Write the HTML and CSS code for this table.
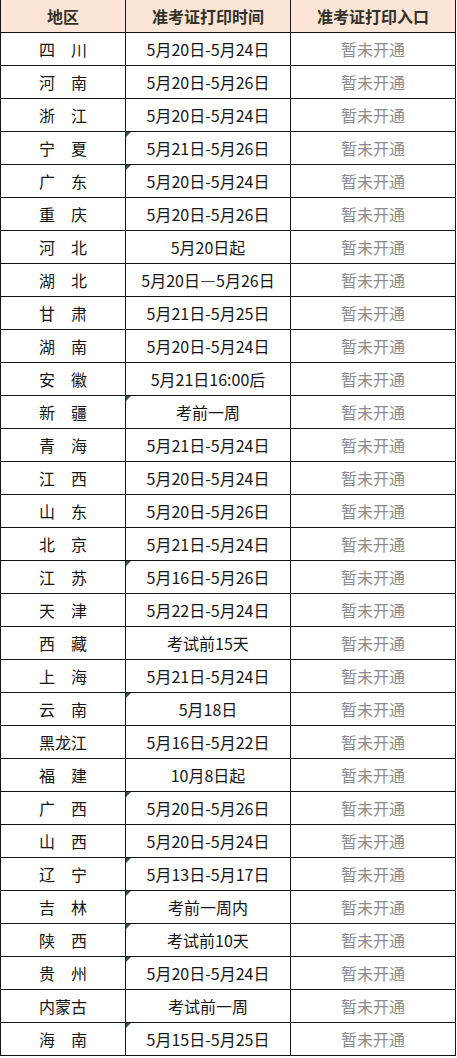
FILE: index.html
```html
<!DOCTYPE html>
<html lang="zh">
<head>
<meta charset="utf-8">
<title>准考证打印时间</title>
<link rel="stylesheet" href="styles.css">
</head>
<body>
<table class="sheet">
  <thead>
    <tr><th class="c1">地区</th><th class="c2">准考证打印时间</th><th class="c3">准考证打印入口</th></tr>
  </thead>
  <tbody>
    <tr><td class="c1">四　川</td><td class="c2">5月20日-5月24日</td><td class="c3">暂未开通</td></tr>
    <tr><td class="c1">河　南</td><td class="c2">5月20日-5月26日</td><td class="c3">暂未开通</td></tr>
    <tr><td class="c1">浙　江</td><td class="c2">5月20日-5月24日</td><td class="c3">暂未开通</td></tr>
    <tr><td class="c1">宁　夏</td><td class="c2 mark">5月21日-5月26日</td><td class="c3">暂未开通</td></tr>
    <tr><td class="c1">广　东</td><td class="c2 mark">5月20日-5月24日</td><td class="c3">暂未开通</td></tr>
    <tr><td class="c1">重　庆</td><td class="c2">5月20日-5月26日</td><td class="c3">暂未开通</td></tr>
    <tr><td class="c1">河　北</td><td class="c2">5月20日起</td><td class="c3">暂未开通</td></tr>
    <tr><td class="c1">湖　北</td><td class="c2">5月20日—5月26日</td><td class="c3">暂未开通</td></tr>
    <tr><td class="c1">甘　肃</td><td class="c2">5月21日-5月25日</td><td class="c3">暂未开通</td></tr>
    <tr><td class="c1">湖　南</td><td class="c2">5月20日-5月24日</td><td class="c3">暂未开通</td></tr>
    <tr><td class="c1">安　徽</td><td class="c2">5月21日16:00后</td><td class="c3">暂未开通</td></tr>
    <tr><td class="c1">新　疆</td><td class="c2 mark">考前一周</td><td class="c3">暂未开通</td></tr>
    <tr><td class="c1">青　海</td><td class="c2">5月21日-5月24日</td><td class="c3">暂未开通</td></tr>
    <tr><td class="c1">江　西</td><td class="c2">5月20日-5月24日</td><td class="c3">暂未开通</td></tr>
    <tr><td class="c1">山　东</td><td class="c2">5月20日-5月26日</td><td class="c3">暂未开通</td></tr>
    <tr><td class="c1">北　京</td><td class="c2">5月21日-5月24日</td><td class="c3">暂未开通</td></tr>
    <tr><td class="c1">江　苏</td><td class="c2 mark">5月16日-5月26日</td><td class="c3">暂未开通</td></tr>
    <tr><td class="c1">天　津</td><td class="c2">5月22日-5月24日</td><td class="c3">暂未开通</td></tr>
    <tr><td class="c1">西　藏</td><td class="c2">考试前15天</td><td class="c3">暂未开通</td></tr>
    <tr><td class="c1">上　海</td><td class="c2">5月21日-5月24日</td><td class="c3">暂未开通</td></tr>
    <tr><td class="c1">云　南</td><td class="c2 mark">5月18日</td><td class="c3">暂未开通</td></tr>
    <tr><td class="c1">黑龙江</td><td class="c2">5月16日-5月22日</td><td class="c3">暂未开通</td></tr>
    <tr><td class="c1">福　建</td><td class="c2">10月8日起</td><td class="c3">暂未开通</td></tr>
    <tr><td class="c1">广　西</td><td class="c2 mark">5月20日-5月26日</td><td class="c3">暂未开通</td></tr>
    <tr><td class="c1">山　西</td><td class="c2">5月20日-5月24日</td><td class="c3">暂未开通</td></tr>
    <tr><td class="c1">辽　宁</td><td class="c2 mark">5月13日-5月17日</td><td class="c3">暂未开通</td></tr>
    <tr><td class="c1">吉　林</td><td class="c2 mark">考前一周内</td><td class="c3">暂未开通</td></tr>
    <tr><td class="c1">陕　西</td><td class="c2 mark">考试前10天</td><td class="c3">暂未开通</td></tr>
    <tr><td class="c1">贵　州</td><td class="c2 mark">5月20日-5月24日</td><td class="c3">暂未开通</td></tr>
    <tr><td class="c1">内蒙古</td><td class="c2">考试前一周</td><td class="c3">暂未开通</td></tr>
    <tr><td class="c1">海　南</td><td class="c2 mark">5月15日-5月25日</td><td class="c3">暂未开通</td></tr>
  </tbody>
</table>
</body>
</html>
```
FILE: styles.css
```css
html, body {
  margin: 0;
  padding: 0;
  background: #ffffff;
}

.sheet {
  border-collapse: separate;
  border-spacing: 0;
  table-layout: fixed;
  width: 456px;
  font-family: "Noto Sans CJK SC", "Noto Sans", sans-serif;
  font-size: 16px;
  color: #161616;
}

.sheet th,
.sheet td {
  box-sizing: border-box;
  height: 33px;
  padding: 0;
  line-height: 32px;
  text-align: center;
  white-space: nowrap;
  border-right: 1px solid #141414;
  border-bottom: 1px solid #141414;
  position: relative;
}

.sheet .c1 {
  width: 126px;
  border-left: 1px solid #141414;
}

.sheet .c2,
.sheet .c3 {
  width: 165px;
}

.sheet th {
  background: #fce5d6;
  font-weight: bold;
  color: #333028;
}

.sheet td.c3 {
  color: #8c8c8c;
}

.sheet td.mark::before {
  content: "";
  position: absolute;
  left: 0;
  top: 0;
  width: 0;
  height: 0;
  border-top: 5px solid #35573f;
  border-right: 5px solid transparent;
}
```
